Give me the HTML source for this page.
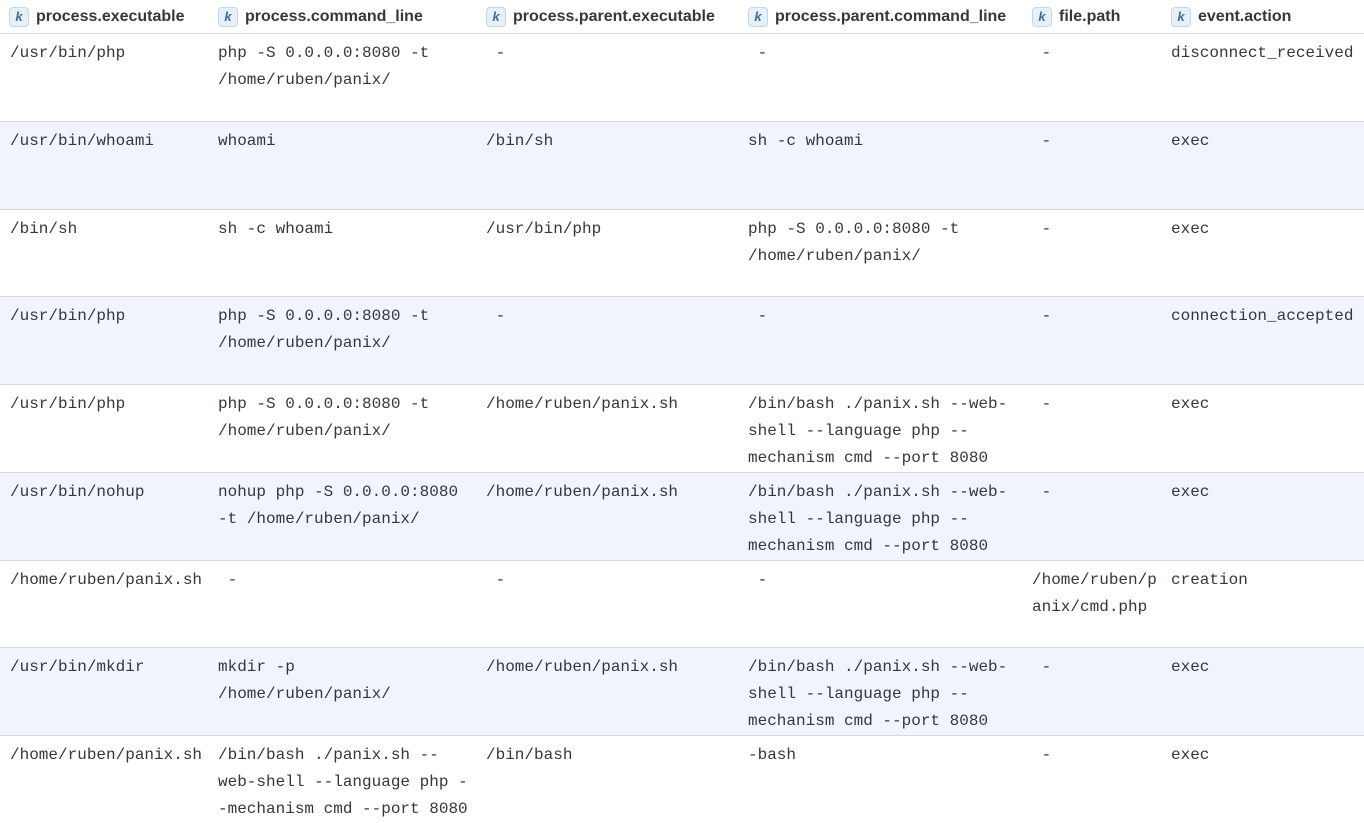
<!DOCTYPE html>
<html><head><meta charset="utf-8"><style>
*{margin:0;padding:0;box-sizing:border-box}
body{width:1364px;height:818px;background:#fff;position:relative;overflow:hidden;font-family:"Liberation Mono",monospace;color:#343741}
.h{position:absolute;top:0;height:33px;display:flex;align-items:center;font-family:"Liberation Sans",sans-serif;font-weight:bold;font-size:16px;color:#343741}
.k{display:inline-block;width:20px;height:20px;border:1px solid #c4d6e8;background:#e6f0f9;border-radius:4px;font-style:italic;font-weight:bold;font-size:13px;color:#3f6c98;text-align:center;line-height:18px;margin-right:7px}
.hl{position:absolute;top:33px;left:0;width:1364px;height:1px;background:#d3dae6}
.r{position:absolute;left:0;width:1364px;border-bottom:1px solid #d3dae6}
.r.a{background:#f1f4fb}
.c{position:absolute;top:6px;font-size:16px;line-height:27px;white-space:pre}
</style></head><body>
<div class="h" style="left:9px"><span class="k">k</span>process.executable</div>
<div class="h" style="left:218px"><span class="k">k</span>process.command_line</div>
<div class="h" style="left:486px"><span class="k">k</span>process.parent.executable</div>
<div class="h" style="left:748px"><span class="k">k</span>process.parent.command_line</div>
<div class="h" style="left:1032px"><span class="k">k</span>file.path</div>
<div class="h" style="left:1171px"><span class="k">k</span>event.action</div>
<div class="hl"></div>

<div class="r" style="top:34px;height:88px"><div class="c" style="left:10px">/usr/bin/php</div><div class="c" style="left:218px">php -S 0.0.0.0:8080 -t
/home/ruben/panix/</div><div class="c" style="left:486px"> -</div><div class="c" style="left:748px"> -</div><div class="c" style="left:1032px"> -</div><div class="c" style="left:1171px">disconnect_received</div></div>

<div class="r a" style="top:122px;height:88px"><div class="c" style="left:10px">/usr/bin/whoami</div><div class="c" style="left:218px">whoami</div><div class="c" style="left:486px">/bin/sh</div><div class="c" style="left:748px">sh -c whoami</div><div class="c" style="left:1032px"> -</div><div class="c" style="left:1171px">exec</div></div>

<div class="r" style="top:210px;height:87px"><div class="c" style="left:10px">/bin/sh</div><div class="c" style="left:218px">sh -c whoami</div><div class="c" style="left:486px">/usr/bin/php</div><div class="c" style="left:748px">php -S 0.0.0.0:8080 -t
/home/ruben/panix/</div><div class="c" style="left:1032px"> -</div><div class="c" style="left:1171px">exec</div></div>

<div class="r a" style="top:297px;height:88px"><div class="c" style="left:10px">/usr/bin/php</div><div class="c" style="left:218px">php -S 0.0.0.0:8080 -t
/home/ruben/panix/</div><div class="c" style="left:486px"> -</div><div class="c" style="left:748px"> -</div><div class="c" style="left:1032px"> -</div><div class="c" style="left:1171px">connection_accepted</div></div>

<div class="r" style="top:385px;height:88px"><div class="c" style="left:10px">/usr/bin/php</div><div class="c" style="left:218px">php -S 0.0.0.0:8080 -t
/home/ruben/panix/</div><div class="c" style="left:486px">/home/ruben/panix.sh</div><div class="c" style="left:748px">/bin/bash ./panix.sh --web-
shell --language php --
mechanism cmd --port 8080</div><div class="c" style="left:1032px"> -</div><div class="c" style="left:1171px">exec</div></div>

<div class="r a" style="top:473px;height:88px"><div class="c" style="left:10px">/usr/bin/nohup</div><div class="c" style="left:218px">nohup php -S 0.0.0.0:8080
-t /home/ruben/panix/</div><div class="c" style="left:486px">/home/ruben/panix.sh</div><div class="c" style="left:748px">/bin/bash ./panix.sh --web-
shell --language php --
mechanism cmd --port 8080</div><div class="c" style="left:1032px"> -</div><div class="c" style="left:1171px">exec</div></div>

<div class="r" style="top:561px;height:87px"><div class="c" style="left:10px">/home/ruben/panix.sh</div><div class="c" style="left:218px"> -</div><div class="c" style="left:486px"> -</div><div class="c" style="left:748px"> -</div><div class="c" style="left:1032px">/home/ruben/p
anix/cmd.php</div><div class="c" style="left:1171px">creation</div></div>

<div class="r a" style="top:648px;height:88px"><div class="c" style="left:10px">/usr/bin/mkdir</div><div class="c" style="left:218px">mkdir -p
/home/ruben/panix/</div><div class="c" style="left:486px">/home/ruben/panix.sh</div><div class="c" style="left:748px">/bin/bash ./panix.sh --web-
shell --language php --
mechanism cmd --port 8080</div><div class="c" style="left:1032px"> -</div><div class="c" style="left:1171px">exec</div></div>

<div class="r" style="top:736px;height:82px;border:none"><div class="c" style="left:10px">/home/ruben/panix.sh</div><div class="c" style="left:218px">/bin/bash ./panix.sh --
web-shell --language php -
-mechanism cmd --port 8080</div><div class="c" style="left:486px">/bin/bash</div><div class="c" style="left:748px">-bash</div><div class="c" style="left:1032px"> -</div><div class="c" style="left:1171px">exec</div></div>
</body></html>
